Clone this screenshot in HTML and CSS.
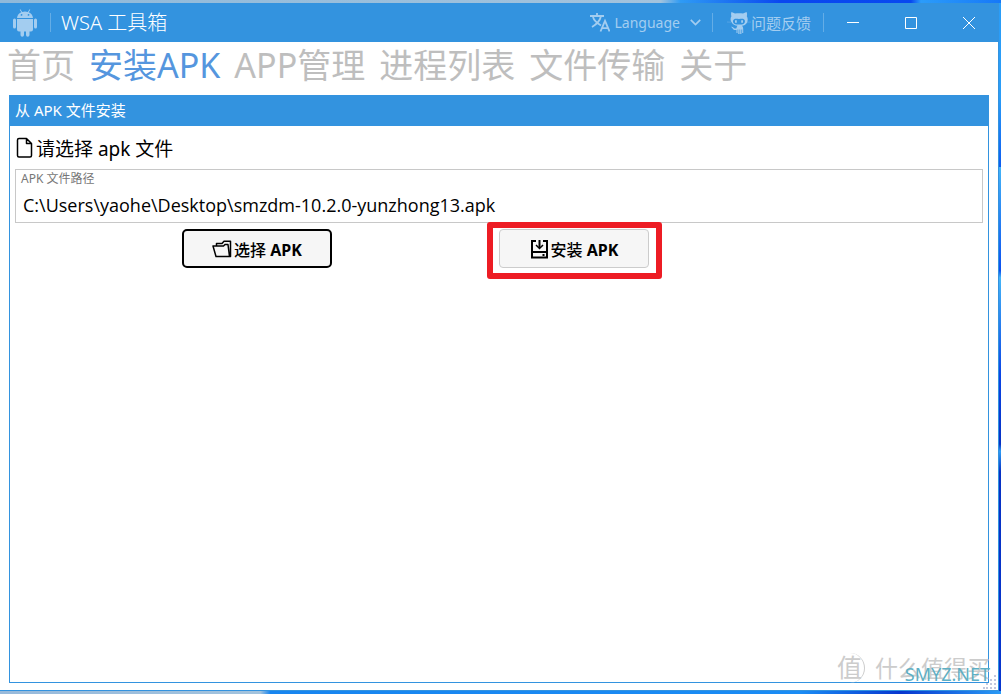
FILE: index.html
```html
<!DOCTYPE html>
<html lang="zh-CN">
<head>
    <meta charset="UTF-8">
    <meta name="viewport" content="width=device-width, initial-scale=1.0">
    <title>WSA 工具箱</title>
    <link rel="stylesheet" href="styles.css">
</head>
<body>
    <div class="window">
        <header class="titlebar">
            <svg class="logo" viewBox="0 0 26 28" fill="currentColor" aria-hidden="true">
                <path d="M5 9a8 7 0 0 1 4.300-5.700L7.700.8l.7-.5 1.800 2.600a9 9 0 0 1 5.600 0L17.600.3l.7.5-1.600 2.500A8 7 0 0 1 21 9zM9.500 5a.9.900 0 1 0 .1 1.800A.9.900 0 0 0 9.500 5zm7 0a.9.900 0 1 0 .1 1.800A.9.900 0 0 0 16.500 5z"/>
                <path d="M5 10h16v10.500a2 2 0 0 1-2 2h-1.500V26a1.700 1.700 0 0 1-3.500 0v-3.500h-2V26a1.700 1.700 0 0 1-3.500 0v-3.500H7a2 2 0 0 1-2-2z"/>
                <rect x="1" y="9.500" width="3" height="10" rx="1.500"/>
                <rect x="22" y="9.500" width="3" height="10" rx="1.500"/>
            </svg>
            <span class="divider"></span>
            <h1 class="title">WSA 工具箱</h1>
            <button class="command language" type="button">
                <svg width="20" height="19" viewBox="0 0 20 19" fill="none" stroke="currentColor" stroke-width="1.800" aria-hidden="true">
                    <path d="M0 3h14M7 0v3M3 4c1 4 4 6 8 8.500M11 3c-1 5-4 8-9 11"/>
                    <path d="M10.500 18.500L15 7.800l4.500 10.700M12 15.200h6"/>
                </svg>
                <span class="language-name">Language</span>
                <svg class="chevron" width="11" height="7" viewBox="0 0 11 7" fill="none" stroke="currentColor" stroke-width="1.700" aria-hidden="true"><path d="M.8.8l4.700 4.700L10.200.8"/></svg>
            </button>
            <span class="divider"></span>
            <button class="command feedback" type="button">
                <svg width="24" height="22" viewBox="0 0 24 22" aria-hidden="true">
                    <path fill="currentColor" d="M4.500 0L8 1.600c2.600-.6 5.400-.6 8 0L19.500 0c.7 1.500.7 3 .3 4.200C21 6 21 9 19.800 11c-1 1.700-2.800 2.500-4.800 2.800 1 1 1.200 2 1.200 3.500V21h-1v-3.500h-.8V22h-1.200v-4.500h-.7V22h-1.200v-4.500h-.8V21h-1v-3c-2.500.4-3.500-.5-4.200-2l-1.300-1.300c2-.4 2.500 1.600 4 1.800.5 0 1 0 1.500-.3.100-1 .4-1.700 1-2.400-2.600-.3-4.600-1.200-5.600-3C3.200 9 3.200 6 4.400 4.200 4 3 3.900 1.500 4.500 0z"/>
                    <path class="face" d="M7.500 7c1.300-.5 2.800 0 4.500 0s3.200-.5 4.500 0c2 .8 1.800 3.800.3 4.700-1.300.8-3 .9-4.800.9s-3.500-.1-4.800-.9C5.700 10.800 5.500 7.800 7.500 7z"/>
                    <path fill="currentColor" d="M8 8.200h1.800v2.600H8zm6.200 0H16v2.600h-1.800z"/>
                    <path stroke="currentColor" stroke-width=".3" d="M0 10l4 .2M24 10l-4 .2"/>
                </svg>
                <span>问题反馈</span>
            </button>
            <span class="divider"></span>
            <div class="window-buttons">
                <button type="button" aria-label="最小化"><svg width="12" height="12" stroke="currentColor"><path d="M0 5.500h12"/></svg></button>
                <button type="button" aria-label="最大化"><svg width="12" height="12" fill="none" stroke="currentColor"><path d="M.5.500h11v11H.5z"/></svg></button>
                <button type="button" aria-label="关闭"><svg width="12" height="12" stroke="currentColor"><path d="M0 0l12 12M12 0L0 12"/></svg></button>
            </div>
        </header>

        <nav class="tabs">
            <a href="#home">首页</a>
            <a href="#install" class="active">安装APK</a>
            <a href="#apps">APP管理</a>
            <a href="#processes">进程列表</a>
            <a href="#files">文件传输</a>
            <a href="#about">关于</a>
        </nav>

        <main class="panel">
            <h2 class="panel-header">从 APK 文件安装</h2>
            <div class="panel-body">
                <p class="prompt">
                    <svg width="18" height="22" viewBox="0 0 18 22" fill="none" stroke="currentColor" stroke-width="1.500" stroke-linejoin="round" aria-hidden="true"><path d="M4 1.500h7.500l5 5V18.500a1.500 1.500 0 0 1-1.500 1.500H4A1.500 1.500 0 0 1 2.500 18.500V3A1.500 1.500 0 0 1 4 1.500zM11.500 1.500v5h5"/></svg>
                    <span>请选择 apk 文件</span>
                </p>
                <div class="field">
                    <label for="apkPath">APK 文件路径</label>
                    <input id="apkPath" type="text" value="C:\Users\yaohe\Desktop\smzdm-10.2.0-yunzhong13.apk">
                </div>
                <div class="actions">
                    <button class="btn focused" type="button">
                        <svg width="20" height="18" viewBox="0 0 20 18" fill="none" stroke="currentColor" stroke-width="1.500" stroke-linejoin="round" aria-hidden="true"><path d="M4.500 6V3.500H10L12 1.200h6.500v15.300H16M1 6h10.500l1.500-1.500h3l1.500 12H4z"/></svg>
                        <span>选择 <b>APK</b></span>
                    </button>
                    <div class="highlight">
                        <button class="btn" type="button">
                            <svg width="19" height="20" viewBox="0 0 19 20" fill="none" stroke="currentColor" stroke-width="2" aria-hidden="true"><path d="M6 2H2v16.500h15V2h-4M2 13h15M9.500 1v8"/><path stroke-width="1.500" d="M6 6l3.500 3.500L13 6"/><path d="M12.500 16h2"/></svg>
                            <span>安装 <b>APK</b></span>
                        </button>
                    </div>
                </div>
            </div>
        </main>

        <div class="watermark" aria-hidden="true">
            <span class="badge">值</span>
            <span class="brand">什么值得买</span>
            <span class="site">SMYZ.NET</span>
        </div>
        <svg class="grip" width="14" height="14" fill="#c3c9dd" aria-hidden="true">
            <path d="M11 0h2v2h-2zM7 4h2v2H7zM11 4h2v2h-2zM3 8h2v2H3zM7 8h2v2H7zM11 8h2v2h-2zM0 12h2v2H0zM3 12h2v2H3zM7 12h2v2H7zM11 12h2v2h-2z"/>
        </svg>
    </div>
</body>
</html>
```
FILE: styles.css
```css
* {
    box-sizing: border-box;
}

body {
    margin: 0;
    height: 100vh;
    padding: 3px 2px 3px 0;
    font-family: "Noto Sans", "Noto Sans CJK SC", sans-serif;
    color: #000;
    background:
        linear-gradient(90deg, #8fb9da 0, #a3c3dd 66%, #2e9bf5 68%, #0a47f0 78%, #0848f0 91%, #2b9cfa 92%, #1678f8 100%) top / 100% 3px no-repeat,
        linear-gradient(90deg, #98badb 0, #a3c3dd 26%, #1785f0 27%, #1a8cf5 80%, #0836cf 90%, #2a9bf5 100%) bottom / 100% 3px no-repeat,
        linear-gradient(180deg, #2a9df8 0, #2a9df8 14%, #0d5cf0 24%, #45b5f8 24%, #0a50ef 39%, #45b5f8 40%, #0a45e5 54%, #0732c4 64%, #2f9df5 65%, #0732c4 68%, #0836cf 100%);
}

h1, h2, p {
    margin: 0;
    font-weight: 400;
}

button {
    padding: 0;
    border: none;
    background: none;
    font-family: inherit;
    color: inherit;
}

.window {
    position: relative;
    display: flex;
    flex-direction: column;
    height: 100%;
    background: #fff;
    border: 1px solid #3393df;
    border-width: 0 1px 1px 0;
}

/* title bar */
.titlebar {
    display: flex;
    align-items: center;
    height: 39px;
    flex-shrink: 0;
    background: #3393df;
    color: #a3cdf0;
}

.logo {
    width: 26px;
    height: 28px;
    margin: 0 12px;
}

.divider {
    width: 1px;
    height: 19px;
    background: #64ade6;
}

.title {
    flex: 1;
    margin-left: 10px;
    font-size: 20px;
    font-weight: 300;
    line-height: 28px;
    color: #fff;
}

.command {
    display: flex;
    align-items: center;
    font-size: 15px;
    line-height: 20px;
}

.language {
    gap: 5px;
    padding-right: 11px;
}

.language-name {
    font-size: 14px;
}

.chevron {
    margin-left: 5px;
}

.feedback {
    padding: 0 12px 0 14px;
}

.face {
    fill: #3393df;
}

.window-buttons {
    display: flex;
    color: #fff;
}

.window-buttons button {
    display: grid;
    place-items: center;
    width: 58px;
    height: 39px;
}

/* tabs */
.tabs {
    display: flex;
    gap: 14px;
    padding: 0 7px;
    height: 53px;
    flex-shrink: 0;
    font-size: 34px;
    line-height: 46px;
}

.tabs a {
    color: #bebebe;
    text-decoration: none;
}

.tabs .active {
    color: #5596de;
}

/* panel */
.panel {
    flex: 1;
    margin: 0 9px 7px;
    border: 1px solid #3393df;
    border-top: none;
}

.panel-header {
    padding: 0 5px;
    font-size: 15px;
    line-height: 31px;
    background: #3393df;
    color: #fff;
}

.panel-body {
    padding: 8px 5px;
}

.prompt {
    display: flex;
    align-items: center;
    gap: 3px;
    height: 35px;
    padding-bottom: 8px;
    font-size: 19px;
}

.field {
    display: flex;
    flex-direction: column;
    height: 54px;
    padding: 0 5px;
    border: 1px solid #c8c8c8;
}

.field label {
    font-size: 12px;
    line-height: 18px;
    color: #777;
}

.field input {
    padding: 0 2px;
    border: none;
    outline: none;
    font-family: "Open Sans", "Noto Sans CJK SC", sans-serif;
    font-size: 18px;
    line-height: 34px;
    height: 34px;
    color: #000;
    background: none;
}

.actions {
    display: flex;
    gap: 167px;
    padding: 6px 0 0 167px;
}

.btn {
    display: flex;
    align-items: center;
    justify-content: center;
    gap: 2px;
    width: 150px;
    height: 39px;
    border: 1px solid #ccc;
    border-radius: 4px;
    background: #f6f6f6;
    font-size: 16px;
    font-weight: 500;
}

.btn b {
    font-weight: 700;
}

.btn.focused {
    border: 2px solid #000;
    border-radius: 5px;
}

.highlight {
    position: relative;
}

.highlight::after {
    content: "";
    position: absolute;
    inset: -7px -13px -11px -12px;
    border: 6px solid #ed1c24;
    border-radius: 3px;
    pointer-events: none;
}

/* watermark over the lower right corner */
.watermark {
    position: absolute;
    right: 8px;
    bottom: 4px;
    display: flex;
    align-items: center;
    gap: 10px;
    color: #ccc;
    pointer-events: none;
}

.badge {
    width: 30px;
    height: 30px;
    border-right: 1px solid #ccc;
    border-radius: 50%;
    font-size: 25px;
    line-height: 28px;
    text-align: center;
}

.brand {
    font-size: 23px;
    line-height: 36px;
}

.site {
    position: absolute;
    right: 0;
    bottom: 0;
    font-size: 18px;
    line-height: 24px;
    color: #5eafc4;
}

.grip {
    position: absolute;
    right: 1px;
    bottom: 1px;
}
```
